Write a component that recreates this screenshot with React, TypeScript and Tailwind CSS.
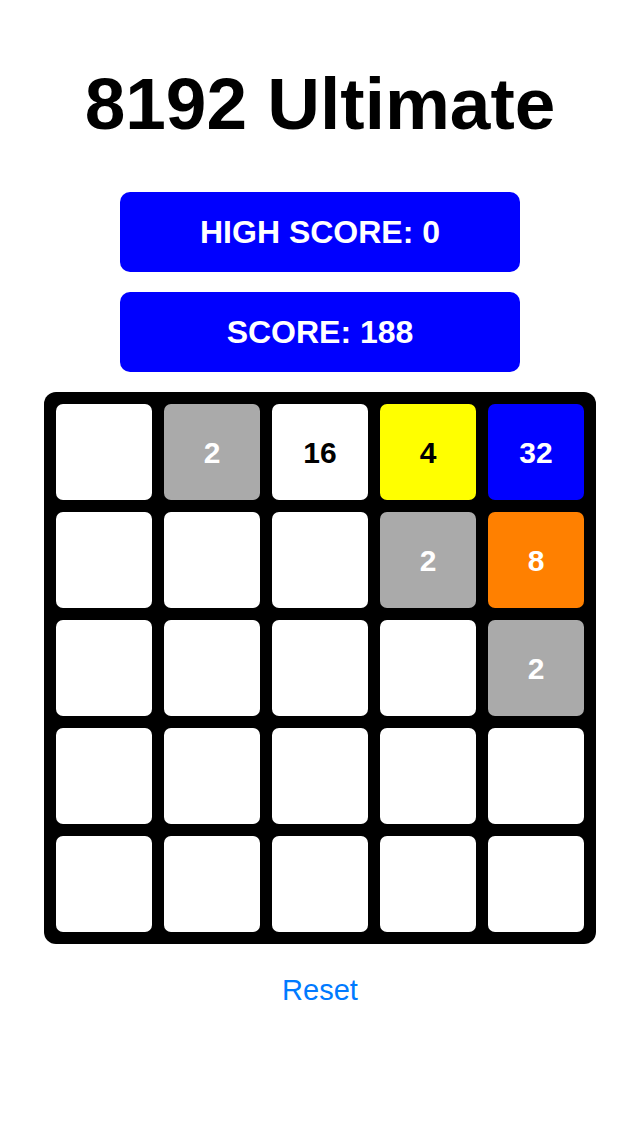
import React from 'react';

type Cell = { value: number | null; bg: string; text: string };

const EMPTY: Cell = { value: null, bg: 'bg-white', text: 'text-black' };

const BOARD: Cell[][] = [
  [
    EMPTY,
    { value: 2, bg: 'bg-[#aaaaaa]', text: 'text-white' },
    { value: 16, bg: 'bg-white', text: 'text-black' },
    { value: 4, bg: 'bg-[#ffff00]', text: 'text-black' },
    { value: 32, bg: 'bg-[#0000ff]', text: 'text-white' },
  ],
  [
    EMPTY,
    EMPTY,
    EMPTY,
    { value: 2, bg: 'bg-[#aaaaaa]', text: 'text-white' },
    { value: 8, bg: 'bg-[#ff8000]', text: 'text-white' },
  ],
  [EMPTY, EMPTY, EMPTY, EMPTY, { value: 2, bg: 'bg-[#aaaaaa]', text: 'text-white' }],
  [EMPTY, EMPTY, EMPTY, EMPTY, EMPTY],
  [EMPTY, EMPTY, EMPTY, EMPTY, EMPTY],
];

export default function App() {
  return (
    <div className="min-h-[1136px] w-[640px] bg-white flex flex-col items-center pt-[68px] font-['Liberation_Sans',Arial,sans-serif]">
      <h1 className="text-[73px] leading-[72px] font-bold text-black">8192 Ultimate</h1>

      <div className="mt-[52px] flex flex-col gap-5">
        <div className="w-[400px] h-[80px] rounded-[10px] bg-[#0000ff] flex items-center justify-center text-white text-[32px] font-bold">
          HIGH SCORE: 0
        </div>
        <div className="w-[400px] h-[80px] rounded-[10px] bg-[#0000ff] flex items-center justify-center text-white text-[32px] font-bold">
          SCORE: 188
        </div>
      </div>

      <div className="mt-5 w-[552px] bg-black rounded-[12px] p-3 grid grid-cols-5 gap-3">
        {BOARD.flat().map((cell, i) => (
          <div
            key={i}
            className={`w-[96px] h-[96px] rounded-[7px] flex items-center justify-center text-[30px] font-bold ${cell.bg} ${cell.text}`}
          >
            {cell.value ?? ''}
          </div>
        ))}
      </div>

      <button className="mt-8 text-[29px] leading-[28px] text-[#007aff]">Reset</button>
    </div>
  );
}
